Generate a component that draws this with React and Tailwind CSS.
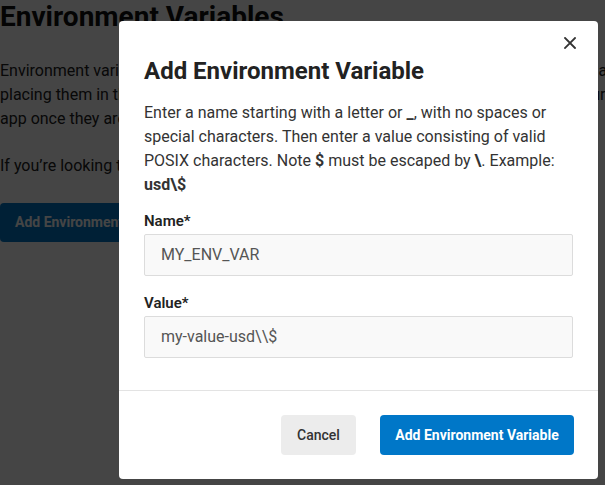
import React from 'react';

function CloseIcon() {
  return (
    <svg width="12" height="12" viewBox="0 0 12 12" fill="none">
      <path d="M1 1L11 11M11 1L1 11" stroke="#333" strokeWidth="1.8" strokeLinecap="square" />
    </svg>
  );
}

function Field({ label, value }) {
  return (
    <div>
      <label className="block text-[15px] leading-[21px] font-semibold text-[#222] mb-[2px]">{label}</label>
      <div className="h-[42px] flex items-center px-4 bg-[#f9f9f9] border border-[#dcdcdc] rounded-[2px] text-[16px] text-[#555]">
        {value}
      </div>
    </div>
  );
}

export default function App() {
  return (
    <div className="relative w-[605px] h-[485px] overflow-hidden bg-white" style={{ fontFamily: 'Roboto, "Liberation Sans", sans-serif' }}>
      {/* page behind */}
      <div className="w-[900px]">
        <h1 className="text-[28px] leading-[36px] font-bold text-[#111] -mt-[1px]">Environment Variables</h1>
        <p className="mt-[24px] text-[16px] leading-[24px] text-[#222] whitespace-nowrap">
          Environment variables let you keep configuration out of your code. Set them here, as a rule, by
          <br />
          placing them in the environment of your deployment, and they will be available to your
          <br />
          app once they are saved and the app is redeployed.
        </p>
        <p className="mt-[23px] text-[16px] leading-[24px] text-[#222]">If you’re looking to store secrets, use the secrets manager instead.</p>
        <button className="mt-[25px] h-[39px] px-[15px] rounded-[4px] bg-[#0077c8] text-white font-bold text-[14px]">
          Add Environment Variable
        </button>
      </div>

      {/* overlay */}
      <div className="absolute inset-0 bg-black/[0.73]" />

      {/* modal */}
      <div className="absolute left-[119px] top-[21px] w-[479px] h-[458px] bg-white rounded-[4px] flex flex-col">
        <button className="absolute right-[22px] top-[16px] w-[12px] h-[12px] flex items-center justify-center">
          <CloseIcon />
        </button>
        <div className="px-[25px] pt-[36px] pb-[32px] border-b border-[#e3e3e3]">
          <h2 className="text-[24px] leading-[28px] font-bold text-[#222] mb-[16px]">Add Environment Variable</h2>
          <p className="text-[16px] leading-[24px] text-[#333]">
            Enter a name starting with a letter or <b>_</b>, with no spaces or special characters. Then enter a value consisting of valid POSIX characters. Note <b>$</b> must be escaped by <b>\</b>. Example: <b>usd\$</b>
          </p>
          <div className="mt-[14px] flex flex-col gap-[17px]">
            <Field label="Name*" value="MY_ENV_VAR" />
            <Field label="Value*" value="my-value-usd\\$" />
          </div>
        </div>
        <div className="flex justify-end gap-[24px] px-[24px] pt-[24px]">
          <button className="h-[40px] w-[75px] rounded-[4px] bg-[#ececec] text-[14px] font-medium text-[#333]">Cancel</button>
          <button className="h-[40px] w-[194px] rounded-[4px] bg-[#0077c8] text-[14px] font-bold text-white">Add Environment Variable</button>
        </div>
      </div>
    </div>
  );
}
